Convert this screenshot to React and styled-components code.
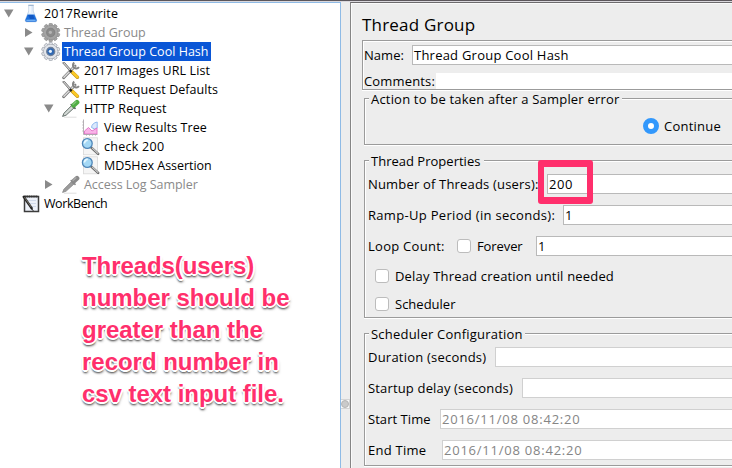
import React from "react";
import styled, { createGlobalStyle } from "styled-components";

const Global = createGlobalStyle`
  * { box-sizing: border-box; }
  body { margin: 0; background: #ededed; overflow: hidden; }
`;

const Window = styled.div`
  display: flex;
  flex-direction: column;
  width: 732px;
  height: 468px;
  overflow: hidden;
  background: #ededed;
  font-family: "Open Sans", "Noto Sans", sans-serif;
  font-size: 13px;
  color: #000;
  white-space: pre;
`;
const TopEdge = styled.div`
  flex: none;
  height: 2px;
  background: #d9d7dc;
  border-top: 1px solid #5c575c;
`;
const Split = styled.div`
  flex: 1;
  display: flex;
  min-height: 0;
`;
const TreePane = styled.div`
  flex: none;
  width: 341px;
  background: #fff;
  border-top: 1px solid #8fbbe6;
  border-right: 1px solid #8fbbe6;
  padding-top: 1px;
`;
const Divider = styled.div`
  flex: none;
  width: 9px;
  padding-top: 397px;
`;
const Grip = styled.div`
  width: 9px;
  height: 10px;
  background: #fafafa;
  border: 1px solid #d4d4d4;
  border-left: 0;
  display: flex;
  align-items: center;
  justify-content: center;
  &::after {
    content: "";
    width: 6px;
    height: 6px;
    border-radius: 50%;
    background: #cacaca;
    border: 1px solid #b4b4b4;
  }
`;

const Row = styled.div`
  display: flex;
  align-items: center;
  height: 19px;
  padding-left: ${(p) => 2 + p.$depth * 20}px;
  font-size: 12.5px;
`;
const Arrow = styled.svg`
  flex: none;
  width: 13px;
  height: 13px;
  margin-right: 6px;
  fill: #8a8a8a;
`;
const Icon = styled.svg`
  flex: none;
  width: 20px;
  height: 19px;
`;
const NodeLabel = styled.span`
  height: 19px;
  line-height: 20px;
  margin-left: 1px;
  padding: 0 2px;
  letter-spacing: ${(p) => p.$ls}px;
  color: ${(p) => (p.$selected ? "#fff" : p.$disabled ? "#8a8a8a" : "#000")};
  background: ${(p) => (p.$selected ? "#0a56d6" : "transparent")};
`;

const Note = styled.div`
  margin: 37px 0 0 82px;
  font: bold 24px/32px "Liberation Sans", Arial, sans-serif;
  color: #ff2f6c;
  text-shadow: -2px 0 #fff, 2px 0 #fff, 0 -2px #fff, 0 2px #fff, 1px 1px #fff, -1px 1px #fff,
    0 3px 2px rgba(0, 0, 0, 0.55), 1px 3px 3px rgba(0, 0, 0, 0.35), -1px 2px 2px rgba(0, 0, 0, 0.25);
`;
const NoteLine = styled.div`
  letter-spacing: ${(p) => p.$ls}px;
`;

const EditPane = styled.div`
  flex: 1;
  min-width: 0;
  overflow: hidden;
  border-left: 1px solid #858585;
  border-top: 1px solid #6c6a6c;
  box-shadow: inset 1px 1px #fafafa;
  padding-left: 11px;
`;
const Title = styled.div`
  height: 37px;
  line-height: 44px;
  font-size: 17px;
  letter-spacing: ${(p) => p.$ls}px;
`;
const Box = styled.div`
  height: ${(p) => p.$h}px;
  margin: ${(p) => p.$top ?? 0}px 0 0 ${(p) => p.$left ?? 2}px;
  border: 1px solid #9b9b9b;
  border-right: 0;
  box-shadow: inset 1px 1px #fff, 0 1px #fff;
`;
const Legend = styled.div`
  width: ${(p) => p.$w}px;
  height: 16px;
  margin: -8px 0 0 4px;
  padding-left: 2px;
  line-height: 16px;
  letter-spacing: ${(p) => p.$ls}px;
  background: #ededed;
`;
const FormRow = styled.div`
  display: flex;
  align-items: center;
  height: ${(p) => p.$h ?? 20}px;
  margin-top: ${(p) => p.$top ?? 11}px;
  padding-left: ${(p) => p.$pad ?? 3}px;
`;
const Label = styled.label`
  flex: none;
  width: ${(p) => p.$w}px;
  line-height: 20px;
  letter-spacing: ${(p) => p.$ls}px;
`;
const Field = styled.div`
  position: relative;
  flex: 1;
  height: 20px;
  line-height: 18px;
  padding-left: 1px;
  background: #fff;
  border: 1px solid ${(p) => (p.$disabled ? "#d0d0d0" : "#b9b9b9")};
  border-right: 0;
  color: ${(p) => (p.$disabled ? "#858585" : "#000")};
  letter-spacing: ${(p) => p.$ls ?? 0}px;
`;
const BareField = styled.div`
  flex: 1;
  height: 16px;
  background: #fff;
`;
const CheckBox = styled.span`
  flex: none;
  width: 14px;
  height: 14px;
  margin-right: ${(p) => p.$gap}px;
  background: #fff;
  border: 1px solid #bcbcbc;
  border-radius: 3px;
`;
const Radio = styled.span`
  flex: none;
  width: 16px;
  height: 16px;
  margin-right: 5px;
  border-radius: 50%;
  border: 5px solid #3298fc;
  background: #fff;
`;
const Highlight = styled.div`
  position: absolute;
  left: -10px;
  top: -15px;
  width: 55px;
  height: 44px;
  border: solid #ff2f6c;
  border-width: 7px 6px;
  border-radius: 3px;
`;

const teeth = [0, 36, 72, 108, 144, 180, 216, 252, 288, 324];
const Gear = ({ edge, fill, ring, hub, hole }) => (
  <Icon viewBox="0 0 20 19">
    <g fill={fill} stroke={edge} strokeWidth="0.8">
      {teeth.map((a) => (
        <rect key={a} x="8" y="0.4" width="3.4" height="5" rx="0.9" transform={`rotate(${a} 9.7 9.5)`} />
      ))}
      <circle cx="9.7" cy="9.5" r="7" />
    </g>
    <circle cx="9.7" cy="9.5" r="6.7" fill={fill} />
    <circle cx="9.7" cy="9.5" r="4" fill={hub} stroke={ring} strokeWidth="1.3" />
    <circle cx="9.4" cy="9.3" r="1.6" fill={hole} />
  </Icon>
);

const Flask = () => (
  <Icon viewBox="0 0 20 19">
    <path d="M7.8 1.5V7L4.3 16q-.4 1.8 1.2 1.8h9q1.600 0 1.200-1.800L12.200 7V1.500z" fill="#e3eefb" stroke="#b4c8e0" strokeWidth=".7" />
    <path d="M6.600 10.500h6.800l2.300 5.600q.3 1.600-1.200 1.600h-9q-1.500 0-1.200-1.600z" fill="#1c6fdc" />
    <path d="M7 11h5l1.500 4H9z" fill="#1258c4" />
    <path d="M5.300 16.300h9.300" stroke="#79b6f7" strokeWidth="1.200" />
    <path d="M7.300 1.300h5.400" stroke="#9db4ce" strokeWidth="1.200" />
    <path d="M9 2v7" stroke="#fff" strokeWidth="1.100" />
  </Icon>
);

const Tools = () => (
  <Icon viewBox="0 0 20 19">
    <path d="M2.600 16.800L14 5" stroke="#777" strokeWidth="2.900" strokeLinecap="round" />
    <path d="M2.900 16.300L13.700 5.200" stroke="#dcdcdc" strokeWidth="1.400" strokeLinecap="round" />
    <path d="M13.200 1.400c-1.600 1.500-1.700 3.700-.2 5.200s3.500 1.300 5-.4" fill="none" stroke="#858585" strokeWidth="2" />
    <path d="M1.600 1.800L3.600 1.500 11 10 9.600 11z" fill="#cfcfcf" stroke="#555" strokeWidth=".7" />
    <path d="M11 11l5.400 5.200" stroke="#b98d1a" strokeWidth="3.500" strokeLinecap="round" />
    <path d="M11.200 11l5.200 5" stroke="#fbc926" strokeWidth="2.600" strokeLinecap="round" />
    <path d="M8.800 9.200l1.900 1.900" stroke="#222" strokeWidth="2.200" />
  </Icon>
);

const Pipette = ({ bulb, body, edge }) => (
  <Icon viewBox="0 0 20 19">
    <path d="M3 18.200h12.500" stroke="#dedede" strokeWidth="1" />
    <path d="M1.600 17.400l1.400-3.200 7.600-7.600 2.400 2.300-7.800 7.200z" fill={body} stroke={edge} strokeWidth=".9" />
    <path d="M10.200 5.600l3.900 3.700" stroke={edge} strokeWidth="1.600" strokeLinecap="round" />
    <path d="M12.700 6.300l3.300-3" stroke={bulb} strokeWidth="4.800" strokeLinecap="round" />
    <path d="M12 5.600l3-2.800" stroke="#fff" strokeOpacity=".3" strokeWidth="1.200" strokeLinecap="round" />
  </Icon>
);

const Chart = () => (
  <Icon viewBox="0 0 20 19">
    <path d="M10.500 9.500q.5-4.500 5.700-5.500v6l-2.500 1z" fill="#dbe9fd" stroke="#8fb8ee" strokeWidth="1" />
    <path d="M3.500 16v-3l4-3.500 3.500 3.500 5-3v6z" fill="#f9b4e8" stroke="#e070c6" strokeWidth=".9" />
    <path d="M2.500 1.500v15h14" fill="none" stroke="#a59da5" strokeWidth=".8" />
    <path d="M1.200 4h1.300M1.200 7h1.300M1.200 10h1.300M1.200 13h1.300M5.500 16.500v1.300M8.500 16.500v1.300M11.500 16.500v1.300M14.500 16.500v1.300" stroke="#aaa" strokeWidth=".7" />
  </Icon>
);

const Magnifier = () => (
  <Icon viewBox="0 0 20 19">
    <rect x="2.500" y=".8" width="14" height="17" fill="#f5f5f5" stroke="#d8d8d8" strokeWidth=".8" />
    <path d="M10.300 10.600l6.900 6.300" stroke="#666" strokeWidth="2.500" strokeLinecap="round" />
    <path d="M11.300 11.100l5.600 5.200" stroke="#d0d0d0" strokeWidth="1.100" strokeLinecap="round" />
    <circle cx="6.300" cy="6.500" r="4.900" fill="#a4d8f5" stroke="#4f86b8" strokeWidth="1.300" />
    <path d="M3.400 6.500q.2-3 3.300-3.400" fill="none" stroke="#e8f8ff" strokeWidth="1.600" />
  </Icon>
);

const Notebook = () => (
  <Icon viewBox="0 0 20 19">
    <path d="M3.500 2.500h14v15h-14z" fill="#edf1f9" stroke="#3c3c3c" strokeWidth="1.500" />
    <path d="M4.300 2.500h12.400" stroke="#333" strokeWidth="2" strokeDasharray="1.200 .6" />
    <path d="M7 6.500h8M8 9.500h7M9 12.500h6" stroke="#c3cee2" strokeWidth=".7" />
    <path d="M2.200 2l9 13" stroke="#222" strokeWidth="2.300" />
    <path d="M3.400 3.200l6.900 10" stroke="#8b877a" strokeWidth=".8" />
    <path d="M10.400 14.500l1.900 2.300" stroke="#111" strokeWidth="1" />
  </Icon>
);

const icons = {
  flask: <Flask />,
  gearOff: <Gear edge="#8f8f8f" fill="#a4a4a4" ring="#858585" hub="#8c8c8c" hole="#b4b4b4" />,
  gear: <Gear edge="#a0a5ae" fill="#e2e5ea" ring="#6f7f98" hub="#2f69b4" hole="#e8f2fc" />,
  tools: <Tools />,
  pipette: <Pipette bulb="#4fae43" body="#d3d9d6" edge="#54605a" />,
  pipetteOff: <Pipette bulb="#8a8a8a" body="#9c9c9c" edge="#8a8a8a" />,
  chart: <Chart />,
  magnifier: <Magnifier />,
  notebook: <Notebook />,
};

const nodes = [
  { text: "2017Rewrite", depth: 0, icon: "flask", open: true, ls: 0.12 },
  { text: "Thread Group", depth: 1, icon: "gearOff", open: false, disabled: true, ls: 0.02 },
  { text: "Thread Group Cool Hash", depth: 1, icon: "gear", open: true, selected: true, ls: 0.03 },
  { text: "2017 Images URL List", depth: 2, icon: "tools", ls: 0.13 },
  { text: "HTTP Request Defaults", depth: 2, icon: "tools", ls: 0.05 },
  { text: "HTTP Request", depth: 2, icon: "pipette", open: true, ls: 0.12 },
  { text: "View Results Tree", depth: 3, icon: "chart", ls: 0.06 },
  { text: "check 200", depth: 3, icon: "magnifier", ls: 0.27 },
  { text: "MD5Hex Assertion", depth: 3, icon: "magnifier", ls: -0.03 },
  { text: "Access Log Sampler", depth: 2, icon: "pipetteOff", open: false, disabled: true, ls: -0.04 },
  { text: "WorkBench", depth: 0, icon: "notebook", ls: -0.42 },
];

const note = [
  ["Threads(users)", -0.08],
  ["number should be", -0.03],
  ["greater than the", -0.03],
  ["record number in", -0.03],
  ["csv text input file.", -0.04],
];

const TreeNode = ({ node }) => (
  <Row $depth={node.depth}>
    <Arrow viewBox="0 0 13 13">
      {node.open === true && <path d="M2 2.500h9.500L6.750 10.500z" />}
      {node.open === false && <path d="M3 2v9l7.500-4.500z" />}
    </Arrow>
    {icons[node.icon]}
    <NodeLabel $ls={node.ls} $selected={node.selected} $disabled={node.disabled}>
      {node.text}
    </NodeLabel>
  </Row>
);

export default function App() {
  return (
    <Window>
      <Global />
      <TopEdge />
      <Split>
        <TreePane>
          {nodes.map((n) => (
            <TreeNode key={n.text} node={n} />
          ))}
          <Note>
            {note.map(([t, ls]) => (
              <NoteLine key={t} $ls={ls}>{t}</NoteLine>
            ))}
          </Note>
        </TreePane>
        <Divider>
          <Grip />
        </Divider>
        <EditPane>
          <Title $ls={0.2}>Thread Group</Title>
          <Box $h={50} $left={0}>
            <FormRow $top={4} $pad={1}>
              <Label $w={48} $ls={0.04}>Name:</Label>
              <Field $ls={0.23}>Thread Group Cool Hash</Field>
            </FormRow>
            <FormRow $top={8} $h={16} $pad={1}>
              <Label $w={72} $ls={0.16}>Comments:</Label>
              <BareField />
            </FormRow>
          </Box>
          <Box $h={47} $top={8}>
            <Legend $w={253} $ls={0.19}>Action to be taken after a Sampler error</Legend>
            <FormRow $top={11} $h={16} $pad={278}>
              <Radio />
              <Label $ls={0.24}>Continue</Label>
            </FormRow>
          </Box>
          <Box $h={158} $top={15}>
            <Legend $w={115} $ls={0.01}>Thread Properties</Legend>
            <FormRow $top={5}>
              <Label $w={179} $ls={0.18}>Number of Threads (users):</Label>
              <Field $ls={0.6}>
                200
                <Highlight />
              </Field>
            </FormRow>
            <FormRow>
              <Label $w={195} $ls={0.31}>Ramp-Up Period (in seconds):</Label>
              <Field>1</Field>
            </FormRow>
            <FormRow>
              <Label $w={89} $ls={0.27}>Loop Count:</Label>
              <CheckBox $gap={6} />
              <Label $w={59} $ls={-0.1}>Forever</Label>
              <Field>1</Field>
            </FormRow>
            <FormRow $top={10} $pad={10}>
              <CheckBox $gap={6} />
              <Label $ls={0.18}>Delay Thread creation until needed</Label>
            </FormRow>
            <FormRow $top={8} $pad={10}>
              <CheckBox $gap={6} />
              <Label $ls={0}>Scheduler</Label>
            </FormRow>
          </Box>
          <Box $h={133} $top={15}>
            <Legend $w={156} $ls={0.22}>Scheduler Configuration</Legend>
            <FormRow $top={5}>
              <Label $w={127} $ls={0.22}>Duration (seconds)</Label>
              <Field $disabled />
            </FormRow>
            <FormRow>
              <Label $w={154} $ls={0.16}>Startup delay (seconds)</Label>
              <Field $disabled />
            </FormRow>
            <FormRow>
              <Label $w={72} $ls={0.05}>Start Time</Label>
              <Field $disabled $ls={0.77}>2016/11/08 08:42:20</Field>
            </FormRow>
            <FormRow>
              <Label $w={74} $ls={0.24}>End Time</Label>
              <Field $disabled $ls={0.77}>2016/11/08 08:42:20</Field>
            </FormRow>
          </Box>
        </EditPane>
      </Split>
    </Window>
  );
}
